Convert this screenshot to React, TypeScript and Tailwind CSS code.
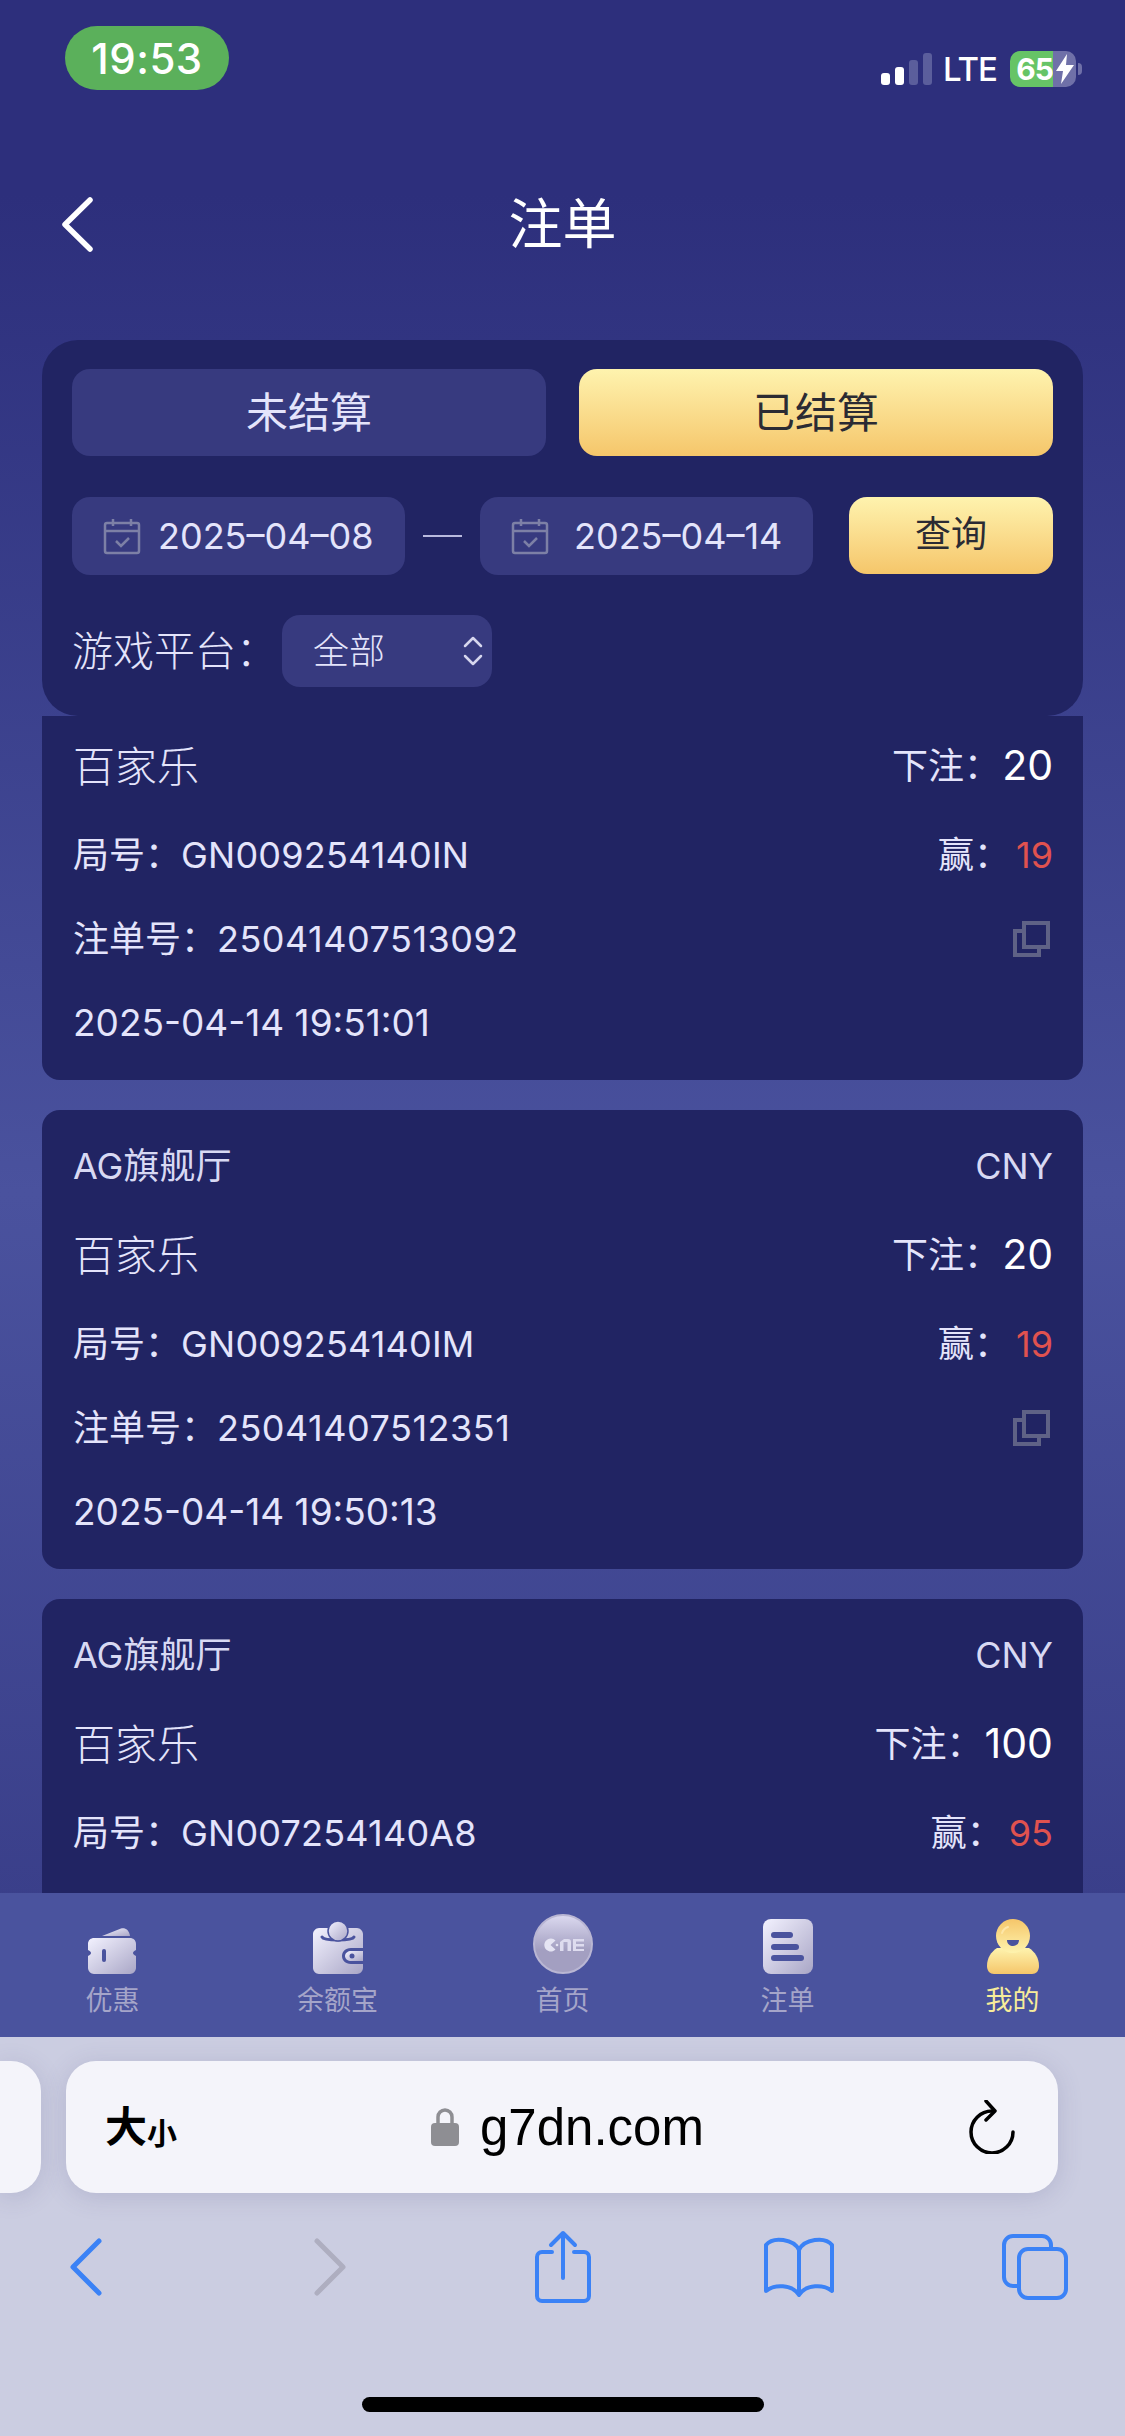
import React from 'react'

const SANS = "font-['Inter','Noto_Sans_CJK_SC',sans-serif]"

type Order = {
  venue?: string
  game: string
  stake: string
  round: string
  win: string
  serial?: string
  time?: string
}

const ORDERS: Order[] = [
  { game: '百家乐', stake: '20', round: 'GN009254140IN', win: '19', serial: '25041407513092', time: '2025-04-14 19:51:01' },
  { venue: 'AG旗舰厅', game: '百家乐', stake: '20', round: 'GN009254140IM', win: '19', serial: '25041407512351', time: '2025-04-14 19:50:13' },
  { venue: 'AG旗舰厅', game: '百家乐', stake: '100', round: 'GN007254140A8', win: '95' },
]

function StatusBar() {
  return (
    <div className="flex h-[116px] shrink-0 items-start justify-between pl-[65px] pr-[43px] pt-[26px]">
      <div className="flex h-[64px] w-[164px] items-center justify-center rounded-[32px] bg-[#5bb05b] text-[42px] font-medium tracking-[0.5px] text-white">
        19:53
      </div>
      <div className="mt-[25px] flex items-center">
        <div className="flex h-[32px] items-end gap-[5px]">
          <span className="h-[12px] w-[9px] rounded-[3px] bg-white" />
          <span className="h-[18px] w-[9px] rounded-[3px] bg-white" />
          <span className="h-[25px] w-[9px] rounded-[3px] bg-[#5b5e9c]" />
          <span className="h-[32px] w-[9px] rounded-[3px] bg-[#5b5e9c]" />
        </div>
        <span className="ml-[11px] text-[33px] font-medium leading-none tracking-[-1px] text-white">LTE</span>
        <div className="ml-[13px] flex h-[36px] w-[66px] overflow-hidden rounded-[10px]">
          <div className="flex w-[43px] items-center justify-end bg-[#66c466] text-[30px] font-bold leading-none tracking-[-1px] text-white">65</div>
          <div className="flex flex-1 items-center justify-center bg-[#6f70a8]">
            <svg width="18" height="30" viewBox="0 0 18 30" fill="#fff">
              <path d="M11 0 0 17h7l-2 13L18 11h-8z" />
            </svg>
          </div>
        </div>
        <span className="ml-[2px] h-[12px] w-[4px] rounded-r-[4px] bg-[#6f70a8]" />
      </div>
    </div>
  )
}

function Header() {
  return (
    <div className="relative flex h-[224px] shrink-0 items-center justify-center pb-[6px]">
      <svg className="absolute left-[62px] top-[81px]" width="31" height="55" viewBox="0 0 31 55" fill="none" stroke="#fff" strokeWidth="5.5" strokeLinecap="round" strokeLinejoin="round">
        <path d="M28 3 3 27.500 28 52" />
      </svg>
      <span className="text-[54px] leading-none text-white">注单</span>
    </div>
  )
}

function CalendarIcon() {
  return (
    <svg width="38" height="37" viewBox="0 0 38 37" fill="none" stroke="#7d80a6" strokeWidth="2.5">
      <rect x="2" y="5" width="34" height="30" rx="2" />
      <path d="M2 13h34M10 1v7M28 1v7" />
      <path d="m13 23 5 5 8-8" />
    </svg>
  )
}

function DateField({ value, end }: { value: string; end?: boolean }) {
  return (
    <div className="flex h-[78px] w-[333px] items-center rounded-[18px] bg-[#373a7f] pl-[31px]">
      <CalendarIcon />
      <span className={end ? 'ml-[25px] text-[36px] leading-none text-[#e4e4fb]' : 'ml-[17px] text-[36px] leading-none text-[#e4e4fb]'}>{value}</span>
    </div>
  )
}

function FilterCard() {
  return (
    <div className="flex h-[376px] shrink-0 flex-col rounded-[36px] bg-[#212463] px-[30px] pt-[29px]">
      <div className="flex justify-between">
        <button className="h-[87px] w-[474px] rounded-[18px] bg-[#373a7f] text-[42px] text-[#e4e4fb]">未结算</button>
        <button className="h-[87px] w-[474px] rounded-[18px] bg-gradient-to-b from-[#fef3ae] to-[#f5c66a] text-[42px] text-[#2b2b33]">已结算</button>
      </div>
      <div className="mt-[41px] flex items-center">
        <DateField value="2025–04–08" />
        <span className="mx-[18px] h-[2px] w-[39px] bg-[#b9bade]" />
        <DateField value="2025–04–14" end />
        <button className="ml-auto h-[77px] w-[204px] self-start rounded-[18px] bg-gradient-to-b from-[#fef3ae] to-[#f5c66a] pb-[3px] text-[36px] text-[#2b2b33]">查询</button>
      </div>
      <div className="mt-[40px] flex items-center">
        <span className="w-[210px] text-[41px] font-light leading-none text-[#e4e4fb]">游戏平台：</span>
        <div className="flex h-[72px] w-[210px] items-center justify-between rounded-[18px] bg-[#373a7f] pl-[31px] pr-[9px]">
          <span className="text-[36px] font-light leading-none text-[#e4e4fb]">全部</span>
          <svg width="20" height="30" viewBox="0 0 20 30" fill="none" stroke="#d6d6ee" strokeWidth="2.5" strokeLinecap="round" strokeLinejoin="round">
            <path d="m2 10 8-8 8 8M2 20l8 8 8-8" />
          </svg>
        </div>
      </div>
    </div>
  )
}

function CopyIcon() {
  return (
    <svg className="mr-[3px]" width="38" height="38" viewBox="0 0 38 38" fill="none" stroke="#5f6286" strokeWidth="4">
      <rect x="12" y="3" width="24" height="24" />
      <path d="M12 11H3v24h24v-8" />
    </svg>
  )
}

function OrderCard({ order, first, last }: { order: Order; first?: boolean; last?: boolean }) {
  let box = 'shrink-0 rounded-[18px] bg-[#212463] pb-[15px] pl-[31px] pr-[30px] pt-[14px] text-[#e4e4fb]'
  if (first) box = 'shrink-0 rounded-b-[18px] bg-[#212463] pb-[15px] pl-[31px] pr-[30px] pt-[3px] text-[#e4e4fb]'
  if (last) box = 'shrink-0 rounded-t-[18px] bg-[#212463] pb-[120px] pl-[31px] pr-[30px] pt-[14px] text-[#e4e4fb]'
  return (
    <div className={box}>
      {order.venue && (
        <div className="flex h-[84px] items-center justify-between text-[36px] text-[#d8d9f3]">
          <span>{order.venue}</span>
          <span>CNY</span>
        </div>
      )}
      <div className="flex h-[94px] items-center justify-between">
        <span className="text-[42px] font-light">{order.game}</span>
        <span className="flex items-center text-[36px]">
          下注：<span className="ml-[2px] text-[41px] text-white">{order.stake}</span>
        </span>
      </div>
      <div className="flex h-[84px] items-center justify-between text-[36px]">
        <span>局号：<span className="tracking-[0.2px]">{order.round}</span></span>
        <span>赢：<span className="ml-[6px] text-[#e0524f]">{order.win}</span></span>
      </div>
      {order.serial && (
        <div className="flex h-[84px] items-center justify-between text-[36px]">
          <span>注单号：<span className="tracking-[0.5px]">{order.serial}</span></span>
          <CopyIcon />
        </div>
      )}
      {order.time && <div className="flex h-[84px] items-center text-[37px]">{order.time}</div>}
    </div>
  )
}

function NavItem({ label, active, children }: { label: string; active?: boolean; children: React.ReactNode }) {
  return (
    <div className="flex flex-col items-center">
      <div className="flex h-[64px] items-end">{children}</div>
      <span className={active ? 'mt-[9px] text-[27px] leading-[36px] text-[#f7ec9a]' : 'mt-[9px] text-[27px] leading-[36px] text-[#a5a5c9]'}>{label}</span>
    </div>
  )
}

function BottomNav() {
  return (
    <div className="grid h-[144px] shrink-0 grid-cols-5 bg-[#4a539e] pt-[17px]">
      <svg width="0" height="0" className="absolute">
        <defs>
          <linearGradient id="silver" x1="0" y1="0" x2="1" y2="1">
            <stop offset="0" stopColor="#f3f2ff" />
            <stop offset="1" stopColor="#a9a6c6" />
          </linearGradient>
          <linearGradient id="coin" x1="0" y1="0" x2="0" y2="1">
            <stop offset="0" stopColor="#dcdaf0" />
            <stop offset="0.6" stopColor="#a39fc1" />
            <stop offset="1" stopColor="#a39fc1" />
          </linearGradient>
          <linearGradient id="goldBody" x1="0" y1="0" x2="0" y2="1">
            <stop offset="0" stopColor="#fef3ae" />
            <stop offset="1" stopColor="#f5c66a" />
          </linearGradient>
          <linearGradient id="goldHead" x1="0" y1="0" x2="0" y2="1">
            <stop offset="0" stopColor="#f5c66a" />
            <stop offset="1" stopColor="#fef3ae" />
          </linearGradient>
        </defs>
      </svg>
      <NavItem label="优惠">
        <svg className="mr-[2px]" width="48" height="46" viewBox="0 0 48 46">
          <path d="M14 8 33 .5c4-1 8 1 9 7.500z" fill="url(#silver)" />
          <path d="M6 10h36c3 0 6 2 6 6v6c-2 1-3 2-3 3s1 2 3 3v12c0 3-3 6-6 6H6c-3 0-6-3-6-6V28c2-1 3-2 3-3s-1-2-3-3v-6c0-4 3-6 6-6z" fill="url(#silver)" />
          <rect x="14" y="21" width="4" height="13" rx="2" fill="#4a539e" />
        </svg>
      </NavItem>
      <NavItem label="余额宝">
        <svg width="50" height="53" viewBox="0 0 50 53">
          <path d="M6 7h38c3 0 6 3 6 6v14H38c-6 0-9 4-9 8s3 8 9 8h12v4c0 3-3 6-6 6H6c-3 0-6-3-6-6V13c0-3 3-6 6-6z" fill="url(#silver)" />
          <path d="M9 16c2 4 30 4 32 0" fill="none" stroke="#4a539e" strokeWidth="3" strokeLinecap="round" />
          <circle cx="25" cy="10" r="10" fill="url(#silver)" stroke="#4a539e" strokeWidth="1.5" />
          <path d="M50 30H38c-3 0-6 2-6 5s3 5 6 5h12z" fill="url(#silver)" />
          <circle cx="39" cy="35" r="2.5" fill="#4a539e" />
        </svg>
      </NavItem>
      <NavItem label="首页">
        <svg width="60" height="60" viewBox="0 0 60 60">
          <circle cx="30" cy="30" r="29" fill="url(#coin)" stroke="#b9b6d3" strokeWidth="2" />
          <path d="M18 24.500a6.500 6.500 0 1 0 4.500 11l-5-4.500 5-4.500a6.500 6.500 0 0 0-4.500-2z" fill="#e5e4f3" />
          <circle cx="24" cy="31" r="1.300" fill="#e5e4f3" />
          <path d="M27 37V28l4-3h4c2 0 3 1 3 3v9h-3.500v-9h-4v9z" fill="#dedcef" />
          <path d="M40 25h11v2.500h-8v2.500h8v2.500h-8V35h8v2H40z" fill="#dedcef" />
        </svg>
      </NavItem>
      <NavItem label="注单">
        <svg width="50" height="55" viewBox="0 0 50 55">
          <rect x="0" y="0" width="50" height="55" rx="8" fill="url(#silver)" />
          <rect x="8" y="13" width="22" height="6" rx="3" fill="#4a539e" />
          <rect x="8" y="25" width="28" height="6" rx="3" fill="#4a539e" />
          <rect x="8" y="36" width="33" height="6" rx="3" fill="#4a539e" />
        </svg>
      </NavItem>
      <NavItem label="我的" active>
        <svg width="52" height="55" viewBox="0 0 52 55">
          <path d="M10 29C4 33 0 39 0 47c0 5 3 8 7 8h38c4 0 7-3 7-8 0-8-4-14-10-18z" fill="url(#goldBody)" />
          <circle cx="26" cy="17" r="17" fill="url(#goldHead)" />
          <path d="M20 21h12c0 4-3 6-6 6s-6-2-6-6z" fill="#4a539e" />
          <path d="M15 14c1-3 3-5 6-6" fill="none" stroke="#fde6a8" strokeWidth="2" strokeLinecap="round" />
        </svg>
      </NavItem>
    </div>
  )
}

function SafariBar() {
  return (
    <div className="flex h-[399px] shrink-0 flex-col bg-[#cbcde1]">
      <div className="mt-[24px] flex h-[132px] shrink-0">
        <div className="h-full w-[41px] rounded-r-[30px] bg-[#f4f4fa] shadow-[0_4px_24px_rgba(80,80,130,0.18)]" />
        <div className="ml-[25px] flex h-full w-[992px] items-center rounded-[30px] bg-[#f4f4fa] pl-[39px] pr-[43px] shadow-[0_4px_24px_rgba(80,80,130,0.18)]">
          <span className="flex w-[326px] items-end font-bold leading-none text-black">
            <span className="text-[42px]">大</span>
            <span className="text-[30px]">小</span>
          </span>
          <svg width="28" height="38" viewBox="0 0 28 38">
            <path d="M7 17V9a7 7 0 0 1 14 0v8" fill="none" stroke="#8e8e93" strokeWidth="3.5" />
            <rect x="0" y="15" width="28" height="23" rx="4" fill="#8e8e93" />
          </svg>
          <span className="ml-[21px] font-['Liberation_Sans',sans-serif] text-[51px] leading-none text-black">g7dn.com</span>
          <svg className="ml-auto" width="46" height="54" viewBox="0 0 46 54" fill="none" stroke="#000" strokeWidth="3.5" strokeLinecap="round" strokeLinejoin="round">
            <path d="M23 11a21 21 0 1 0 21 21" />
            <path d="m17 1 9 10-9 9" />
          </svg>
        </div>
      </div>
      <div className="mt-[35px] flex h-[78px] shrink-0 items-center pl-[69px]">
        <svg width="34" height="58" viewBox="0 0 34 58" fill="none" stroke="#3b82f6" strokeWidth="5" strokeLinecap="round" strokeLinejoin="round">
          <path d="M30 3 4 29l26 26" />
        </svg>
        <svg className="ml-[210px]" width="34" height="58" viewBox="0 0 34 58" fill="none" stroke="#aeaec0" strokeWidth="5" strokeLinecap="round" strokeLinejoin="round">
          <path d="m4 3 26 26L4 55" />
        </svg>
        <svg className="ml-[187px]" width="58" height="74" viewBox="0 0 58 74" fill="none" stroke="#3b82f6" strokeWidth="4" strokeLinecap="round" strokeLinejoin="round">
          <path d="M18 22H8a5 5 0 0 0-5 5v39a5 5 0 0 0 5 5h42a5 5 0 0 0 5-5V27a5 5 0 0 0-5-5H40" />
          <path d="M29 48V3M17 15 29 3l12 12" />
        </svg>
        <svg className="ml-[171px]" width="72" height="60" viewBox="0 0 72 60" fill="none" stroke="#3b82f6" strokeWidth="4" strokeLinecap="round" strokeLinejoin="round">
          <path d="M36 13C31 2 10-1 3 8v46c8-7 26-7 33 4 7-11 25-11 33-4V8C62-1 41 2 36 13zM36 13v45" />
        </svg>
        <svg className="ml-[166px]" width="68" height="66" viewBox="0 0 68 66" fill="none" stroke="#3b82f6" strokeWidth="4" strokeLinecap="round" strokeLinejoin="round">
          <path d="M18 52h-6a9 9 0 0 1-9-9V11a9 9 0 0 1 9-9h29a9 9 0 0 1 9 9v4" />
          <rect x="18" y="15" width="47" height="49" rx="9" />
        </svg>
      </div>
      <div className="mt-auto flex justify-center pb-[24px]">
        <span className="h-[15px] w-[402px] rounded-full bg-black" />
      </div>
    </div>
  )
}

export default function App() {
  return (
    <div className={`flex h-[2436px] w-[1125px] flex-col overflow-hidden bg-gradient-to-b from-[#2d2f7c] from-[8%] via-[#4a529e] via-[49%] to-[#3a3f8a] to-[78%] ${SANS}`}>
      <StatusBar />
      <Header />
      <div className="flex min-h-0 flex-1 flex-col overflow-hidden px-[42px]">
        <FilterCard />
        <div className="flex flex-col gap-[30px]">
          {ORDERS.map((o, i) => (
            <OrderCard key={o.round} order={o} first={i === 0} last={i === ORDERS.length - 1} />
          ))}
        </div>
      </div>
      <BottomNav />
      <SafariBar />
    </div>
  )
}
